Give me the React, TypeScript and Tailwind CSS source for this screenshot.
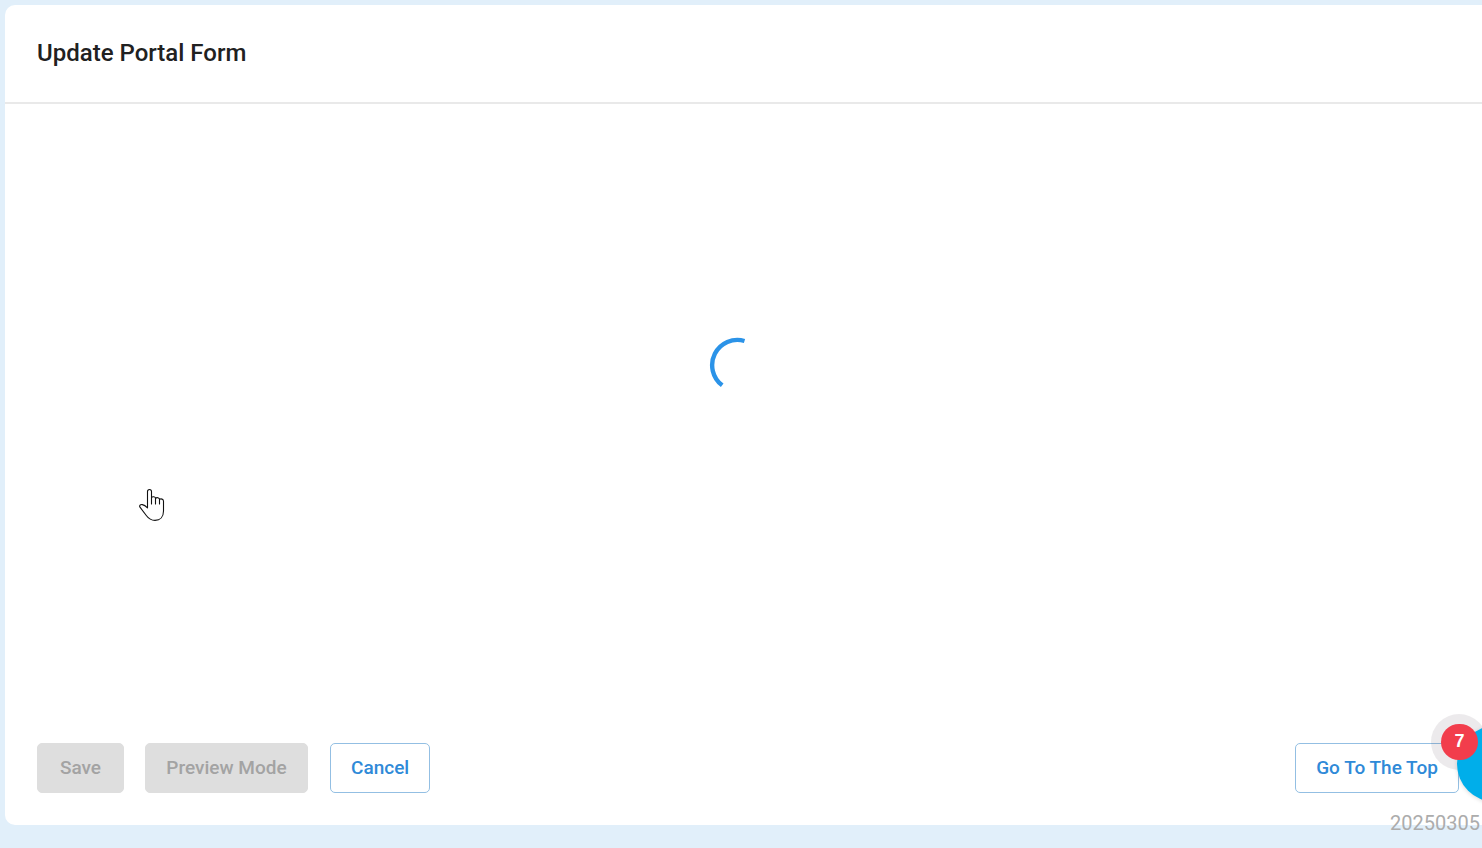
import type { ButtonHTMLAttributes } from "react";
import { clsx } from "clsx";

interface ActionButtonProps extends ButtonHTMLAttributes<HTMLButtonElement> {
    label: string;
}

function ActionButton({ label, disabled, className, ...rest }: ActionButtonProps) {
    return (
        <button
            type="button"
            disabled={disabled}
            className={clsx(
                "h-[50px] px-5 rounded-[5px] border text-[19px] leading-6 font-medium whitespace-nowrap",
                disabled
                    ? "border-[#dedede] bg-[#dedede] text-[#a3a3a3]"
                    : "border-[#93bfe3] bg-white text-[#2f8ad8]",
                className
            )}
            {...rest}
        >
            {label}
        </button>
    );
}

function Spinner() {
    return (
        <svg className="w-14 h-14" viewBox="0 0 56 56" fill="none" role="status" aria-label="Loading">
            <path d="M35.5 4 A25.2 25.2 0 0 0 13.2 48.3" stroke="#2b93e8" strokeWidth="4.4" />
        </svg>
    );
}

function HandPointer() {
    return (
        <svg
            className="absolute left-[138px] top-[488px] w-7 h-[34px] pointer-events-none"
            viewBox="0 0 28 34"
            fill="white"
            stroke="#111"
            strokeWidth="1.1"
            strokeLinejoin="round"
            strokeLinecap="round"
            aria-hidden="true"
        >
            <path d="M9.5 19.8 V3.6 C9.5 0.8 13.5 0.8 13.5 3.6 V9.5 C14.5 8.2 17.4 8.6 17.5 10.3 C18.7 9.2 21.4 9.6 21.5 11.3 C23 10.5 25.5 11 25.5 13.2 V23 C25.5 29 22 32.4 17 32.4 C12.5 32.4 10.5 30.5 8.3 27.5 L2 19.2 C1 17.6 2.4 16.3 4.3 16.6 C6.3 17 8 18.3 9.5 19.8 Z" />
            <path d="M13.5 9.5 V16 M17.5 10.3 V16 M21.5 11.3 V16" />
        </svg>
    );
}

function ChatWidget() {
    return (
        <div className="absolute right-0 bottom-[38px] w-[51px] h-24 overflow-hidden">
            {/* Halo behind the badge */}
            <span className="absolute left-0 top-0 w-14 h-14 rounded-full bg-[#403040]/10" />
            {/* Launcher */}
            <button
                type="button"
                aria-label="Open chat"
                className="absolute left-[26px] top-3 w-[76px] h-[76px] rounded-full bg-[#00aeea] shadow-[0_1px_4px_rgba(0,0,0,0.15)]"
            />
            {/* Unread count */}
            <span className="absolute left-[10px] top-[10px] w-[37px] h-9 rounded-full bg-[#f23d4c] text-white text-lg leading-[34px] font-bold text-center font-[family-name:Liberation_Sans,sans-serif]">
                7
            </span>
        </div>
    );
}

export default function App() {
    return (
        <div className="relative flex flex-col min-h-screen overflow-hidden bg-[#e1effa] pt-[5px] pl-[5px] pb-[23px] font-[Roboto,sans-serif]">
            <div className="flex flex-col flex-1 rounded-l-[10px] bg-white">
                <header className="px-8 pt-8 pb-[33px] border-b-2 border-[#e9e9e9]">
                    <h1 className="text-2xl font-medium text-[#212121]">Update Portal Form</h1>
                </header>

                <main className="flex flex-1 items-center justify-center pb-[118px] pr-[14px]">
                    <Spinner />
                </main>

                <footer className="flex items-center pl-8 pr-[23px] pb-8">
                    <ActionButton label="Save" disabled className="w-[87px]" />
                    <ActionButton label="Preview Mode" disabled className="w-[163px] ml-[21px]" />
                    <ActionButton label="Cancel" className="w-[100px] ml-[22px]" />
                    <ActionButton label="Go To The Top" className="w-[164px] ml-auto" />
                </footer>
            </div>

            <span className="absolute right-[2px] bottom-[13px] text-xl leading-6 text-[#acacac]">20250305</span>
            <ChatWidget />
            <HandPointer />
        </div>
    );
}
